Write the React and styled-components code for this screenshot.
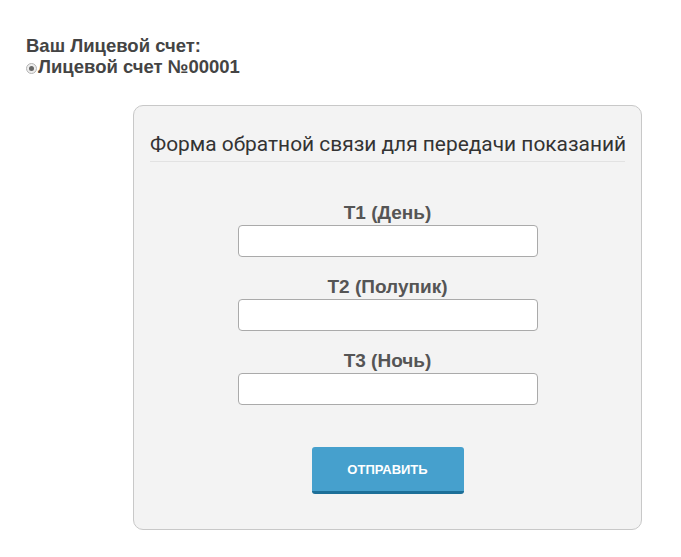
import React from "react";
import styled, { createGlobalStyle } from "styled-components";

const Global = createGlobalStyle`
  body {
    margin: 0;
    background: #ffffff;
    font-family: Roboto, "Liberation Sans", Arial, sans-serif;
    color: #444444;
  }
`;

const Page = styled.div`
  padding: 35px 26px 28px 26px;
`;

const AccountTitle = styled.div`
  font-family: "Liberation Sans", Arial, sans-serif;
  font-size: 18.5px;
  font-weight: 700;
  line-height: 21px;
  color: #444;
`;

const AccountRow = styled.label`
  display: flex;
  align-items: center;
  font-family: "Liberation Sans", Arial, sans-serif;
  font-size: 18.5px;
  font-weight: 700;
  line-height: 21px;
  color: #444;
`;

const Radio = styled.span`
  width: 9px;
  height: 9px;
  border-radius: 50%;
  border: 1px solid #b5b5b5;
  background: #eee;
  margin: 4px 1px 0 0;
  display: flex;
  align-items: center;
  justify-content: center;
  &::after {
    content: "";
    width: 5px;
    height: 5px;
    border-radius: 50%;
    background: #666;
  }
`;

const Panel = styled.form`
  margin: 28px 0 0 107px;
  width: 509px;
  box-sizing: border-box;
  border: 1px solid #c8c8c8;
  border-radius: 10px;
  background: #f3f3f3;
  padding: 24px 16px 35px 16px;
`;

const PanelTitle = styled.div`
  font-size: 20.9px;
  font-weight: 400;
  color: #333;
  line-height: 28px;
  padding-bottom: 3px;
  border-bottom: 1px solid #e2e2e2;
  white-space: nowrap;
`;

const Fields = styled.div`
  display: flex;
  flex-direction: column;
  align-items: center;
  padding-top: 39px;
  gap: 18px;
`;

const Field = styled.div`
  display: flex;
  flex-direction: column;
  align-items: center;
`;

const Label = styled.div`
  font-family: "Liberation Sans", Arial, sans-serif;
  font-size: 19px;
  font-weight: 700;
  color: #555;
  line-height: 24px;
`;

const Input = styled.input`
  width: 300px;
  height: 32px;
  box-sizing: border-box;
  border: 1px solid #aaa;
  border-radius: 4px;
  background: #fff;
  margin: 0;
`;

const Button = styled.button`
  margin-top: 24px;
  width: 152px;
  height: 47px;
  border: none;
  border-bottom: 3px solid #1d6f98;
  border-radius: 3px;
  background: #46a0cd;
  color: #fff;
  font-family: "Liberation Sans", Arial, sans-serif;
  font-weight: 700;
  font-size: 13px;
  text-transform: uppercase;
  padding: 0;
`;

export default function App() {
  return (
    <>
      <Global />
      <Page>
        <AccountTitle>Ваш Лицевой счет:</AccountTitle>
        <AccountRow>
          <Radio />
          Лицевой счет №00001
        </AccountRow>
        <Panel onSubmit={(e) => e.preventDefault()}>
          <PanelTitle>Форма обратной связи для передачи показаний</PanelTitle>
          <Fields>
            <Field>
              <Label>Т1 (День)</Label>
              <Input />
            </Field>
            <Field>
              <Label>Т2 (Полупик)</Label>
              <Input />
            </Field>
            <Field>
              <Label>Т3 (Ночь)</Label>
              <Input />
            </Field>
            <Button type="submit">Отправить</Button>
          </Fields>
        </Panel>
      </Page>
    </>
  );
}
